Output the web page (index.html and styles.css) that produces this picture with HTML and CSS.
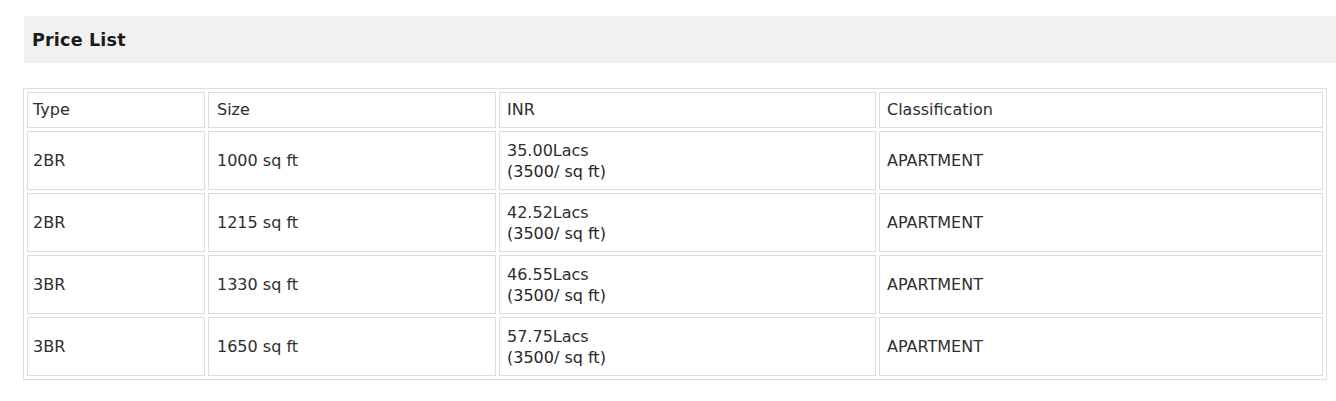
FILE: index.html
```html
<!DOCTYPE html>
<html>
<head>
<meta charset="utf-8">
<title>Price List</title>
<link rel="stylesheet" href="styles.css">
</head>
<body>
<div class="page">
  <div class="section-head">
    <h2 class="section-title">Price List</h2>
  </div>
  <table class="price-table">
    <colgroup>
      <col class="c-type">
      <col class="c-size">
      <col class="c-inr">
      <col class="c-class">
    </colgroup>
    <thead>
      <tr class="head-row">
        <th>Type</th>
        <th>Size</th>
        <th>INR</th>
        <th>Classification</th>
      </tr>
    </thead>
    <tbody>
      <tr class="data-row">
        <td>2BR</td>
        <td>1000 sq ft</td>
        <td><span class="amt">35.00Lacs</span><span class="rate">(3500/ sq ft)</span></td>
        <td>APARTMENT</td>
      </tr>
      <tr class="data-row">
        <td>2BR</td>
        <td>1215 sq ft</td>
        <td><span class="amt">42.52Lacs</span><span class="rate">(3500/ sq ft)</span></td>
        <td>APARTMENT</td>
      </tr>
      <tr class="data-row">
        <td>3BR</td>
        <td>1330 sq ft</td>
        <td><span class="amt">46.55Lacs</span><span class="rate">(3500/ sq ft)</span></td>
        <td>APARTMENT</td>
      </tr>
      <tr class="data-row">
        <td>3BR</td>
        <td>1650 sq ft</td>
        <td><span class="amt">57.75Lacs</span><span class="rate">(3500/ sq ft)</span></td>
        <td>APARTMENT</td>
      </tr>
    </tbody>
  </table>
</div>
</body>
</html>
```

FILE: styles.css
```css
html, body {
  margin: 0;
  padding: 0;
  background: #ffffff;
}

body {
  font-family: "DejaVu Sans", "Liberation Sans", sans-serif;
  color: #333333;
  font-size: 16px;
}

.page {
  padding: 16px 0 0 24px;
}

.section-head {
  background: #f1f1f1;
  height: 47px;
  display: flex;
  align-items: center;
  padding-left: 8px;
}

.section-title {
  margin: 0;
  font-size: 17.5px;
  font-weight: bold;
  color: #1a1a1a;
  letter-spacing: 0.2px;
}

.price-table {
  margin-top: 25px;
  margin-left: -1px;
  width: 1304px;
  table-layout: fixed;
  border-collapse: separate;
  border-spacing: 3px;
  border: 1px solid #dedede;
}

.c-type { width: 178px; }
.c-size { width: 288px; }
.c-inr { width: 377px; }
.c-class { width: 444px; }

.price-table th,
.price-table td {
  box-sizing: border-box;
  border: 1px solid #dddddd;
  text-align: left;
  vertical-align: middle;
  font-weight: normal;
  padding: 0 6px 0 7px;
  line-height: 21px;
  color: #2e2e2e;
}

.price-table th:first-child,
.price-table td:first-child {
  padding-left: 5px;
}

.price-table th:nth-child(2),
.price-table td:nth-child(2) {
  padding-left: 8px;
}

.head-row th {
  height: 36px;
  padding-bottom: 1px;
}

.data-row td {
  height: 59px;
}

.amt,
.rate {
  display: block;
}

.rate {
  color: #262626;
}
```
